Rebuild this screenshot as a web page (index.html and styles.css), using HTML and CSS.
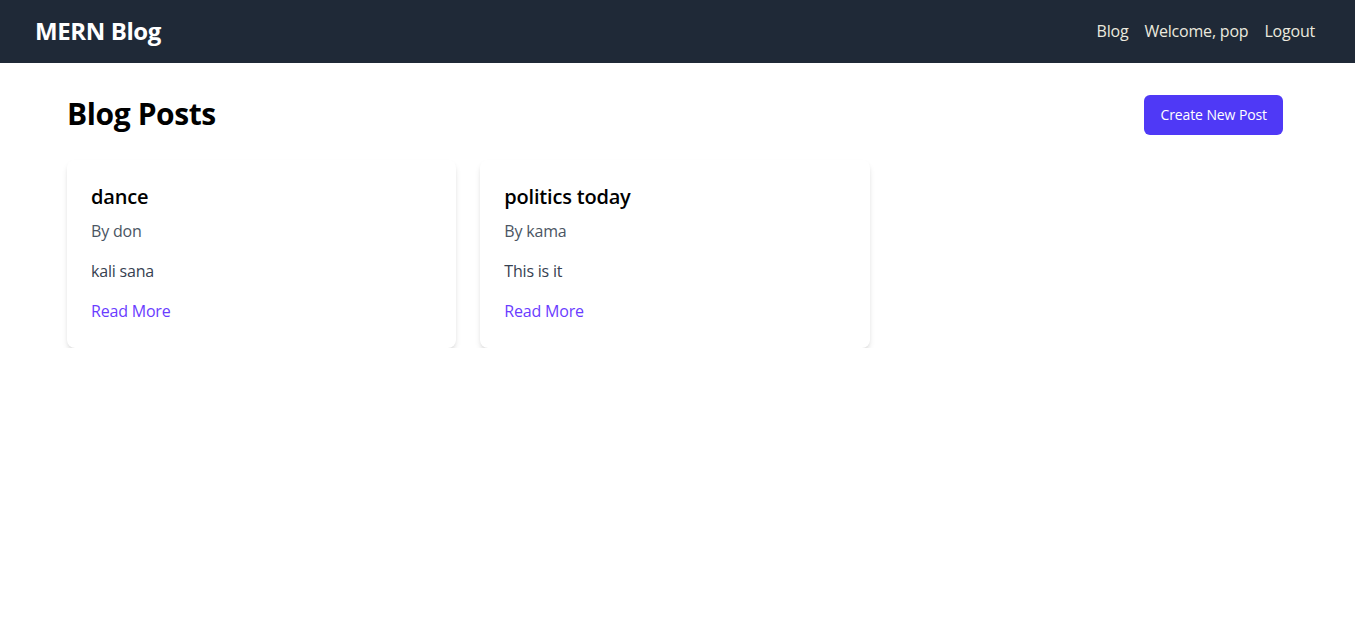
FILE: index.html
```html
<!DOCTYPE html>
<html lang="en">
<head>
<meta charset="utf-8">
<title>MERN Blog</title>
<link rel="stylesheet" href="styles.css">
</head>
<body>
<header class="navbar">
  <a class="brand" href="#">MERN Blog</a>
  <nav class="nav-links">
    <a href="#">Blog</a>
    <span>Welcome, pop</span>
    <a href="#">Logout</a>
  </nav>
</header>
<main class="container">
  <div class="page-head">
    <h1>Blog Posts</h1>
    <button class="btn-primary">Create New Post</button>
  </div>
  <div class="grid">
    <article class="card">
      <h2>dance</h2>
      <p class="author">By don</p>
      <p class="excerpt">kali sana</p>
      <a class="read-more" href="#">Read More</a>
    </article>
    <article class="card">
      <h2>politics today</h2>
      <p class="author">By kama</p>
      <p class="excerpt">This is it</p>
      <a class="read-more" href="#">Read More</a>
    </article>
  </div>
</main>
</body>
</html>
```
FILE: styles.css
```css
* { box-sizing: border-box; }
html, body { margin: 0; padding: 0; background: #fff; }
body {
  font-family: "Open Sans", "Noto Sans", sans-serif;
  color: #000;
  letter-spacing: -0.2px;
}
a { text-decoration: none; }

.navbar {
  height: 63px;
  background: #1f2937;
  display: flex;
  align-items: center;
  justify-content: space-between;
  padding: 0 40px 2px 35px;
}
.brand {
  color: #fff;
  font-size: 24px;
  font-weight: 700;
  letter-spacing: -0.4px;
}
.nav-links {
  display: flex;
  gap: 16px;
  font-size: 16px;
}
.nav-links a, .nav-links span { color: #ece9df; }

.container {
  padding: 32px 72px 0 67px;
}
.page-head {
  display: flex;
  align-items: center;
  justify-content: space-between;
  margin-bottom: 25px;
}
.page-head h1 {
  margin: 0;
  font-size: 30px;
  font-weight: 700;
  line-height: 38px;
  padding-bottom: 2px;
  letter-spacing: -0.4px;
}
.btn-primary {
  font-family: inherit;
  background: #4f39f6;
  color: #fff;
  border: 0;
  border-radius: 6px;
  font-size: 14px;
  line-height: 20px;
  padding: 10px 16px;
  cursor: pointer;
  letter-spacing: -0.1px;
}

.grid {
  display: grid;
  grid-template-columns: repeat(3, 1fr);
  gap: 24px;
}
.card {
  background: #fff;
  border-radius: 8px;
  box-shadow: 0 4px 6px -1px rgba(0,0,0,0.12), 0 2px 4px -2px rgba(0,0,0,0.12);
  padding: 23px 24px 25px;
}
.card h2 {
  margin: 0 0 8px;
  font-size: 20px;
  font-weight: 600;
  line-height: 28px;
}
.author {
  margin: 0 0 16px;
  color: #4b5563;
  font-size: 16px;
  line-height: 24px;
}
.excerpt {
  margin: 0 0 16px;
  color: #374151;
  font-size: 16px;
  line-height: 24px;
}
.read-more {
  display: inline-block;
  color: #6a3cff;
  font-size: 16px;
  line-height: 24px;
}
```
